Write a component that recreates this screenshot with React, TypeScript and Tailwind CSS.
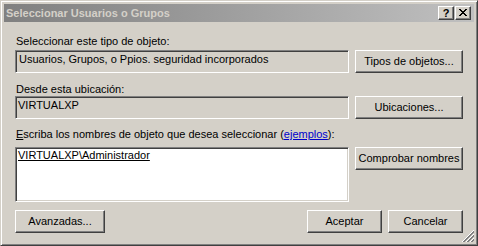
import React from "react";

const raised =
  "bg-[#d4d0c8] border border-t-white border-l-white border-r-[#404040] border-b-[#404040] shadow-[inset_-1px_-1px_#808080]";
const sunken =
  "border border-t-[#808080] border-l-[#808080] border-r-white border-b-white shadow-[inset_1px_1px_#404040,inset_-1px_-1px_#d4d0c8]";

function Btn({ w, children }: { w: string; children: React.ReactNode }) {
  return (
    <div className={`${raised} ${w} h-[23px] flex items-center justify-center shrink-0`}>
      {children}
    </div>
  );
}

export default function App() {
  return (
    <div className="relative w-[478px] h-[246px] bg-[#d4d0c8] border border-t-[#d4d0c8] border-l-[#d4d0c8] border-r-[#404040] border-b-[#404040] shadow-[inset_1px_1px_#ffffff,inset_-1px_-1px_#808080] p-[3px] flex flex-col text-[11px] leading-[13px] text-black font-['Liberation_Sans',Arial,sans-serif] overflow-hidden">
      {/* Title bar */}
      <div className="h-[18px] flex items-center bg-linear-to-r from-[#808080] to-[#c0c0c0] shrink-0">
        <div className="pl-[2px] font-bold text-[#d4d0c8] leading-[18px]">
          Seleccionar Usuarios o Grupos
        </div>
        <div className="ml-auto flex gap-[1px] pr-[3px]">
          <div className={`${raised} w-[16px] h-[14px] flex items-center justify-center`}>
            <span className="font-bold text-[11px] leading-[12px] text-black">?</span>
          </div>
          <div className={`${raised} w-[16px] h-[14px] relative`}>
            <svg
              className="absolute left-[3px] top-[2px]"
              width="8"
              height="7"
              viewBox="0 0 8 7"
              shapeRendering="crispEdges"
            >
              <g fill="#000">
                <rect x="0" y="0" width="2" height="1" />
                <rect x="6" y="0" width="2" height="1" />
                <rect x="1" y="1" width="2" height="1" />
                <rect x="5" y="1" width="2" height="1" />
                <rect x="2" y="2" width="4" height="1" />
                <rect x="3" y="3" width="2" height="1" />
                <rect x="2" y="4" width="4" height="1" />
                <rect x="1" y="5" width="2" height="1" />
                <rect x="5" y="5" width="2" height="1" />
                <rect x="0" y="6" width="2" height="1" />
                <rect x="6" y="6" width="2" height="1" />
              </g>
            </svg>
          </div>
        </div>
      </div>

      {/* Content */}
      <div className="flex flex-col px-[11px]">
        <div className="h-[28px] pt-[13px] pl-[1px] shrink-0">Seleccionar este tipo de objeto:</div>
        <div className="flex gap-[6px] h-[23px]">
          <div className={`${sunken} flex-1 h-[23px] pt-[2px] pl-[3px] bg-[#d4d0c8]`}>
            Usuarios, Grupos, o Ppios. seguridad incorporados
          </div>
          <Btn w="w-[108px]">Tipos de objetos...</Btn>
        </div>

        <div className="h-[23px] pt-[10px] pl-[1px] shrink-0">Desde esta ubicación:</div>
        <div className="flex gap-[6px] h-[23px]">
          <div className={`${sunken} flex-1 h-[23px] pt-[2px] pl-[2px] bg-[#d4d0c8]`}>VIRTUALXP</div>
          <Btn w="w-[108px]">Ubicaciones...</Btn>
        </div>

        <div className="h-[28px] pt-[9px] pl-[1px] shrink-0">
          <span className="underline">E</span>scriba los nombres de objeto que desea seleccionar (
          <span className="underline text-[#0000cc]">ejemplos</span>):
        </div>
        <div className="flex gap-[6px] h-[55px] items-start">
          <div className={`${sunken} flex-1 h-[55px] pt-[1px] pl-[2px] bg-white`}>
            <span className="underline">{"VIRTUALXP\\Administrador"}</span>
          </div>
          <Btn w="w-[108px]">Comprobar nombres</Btn>
        </div>

        <div className="flex mt-[8px] h-[23px]">
          <Btn w="w-[90px]">Avanzadas...</Btn>
          <div className="ml-auto flex gap-[6px]">
            <Btn w="w-[75px]">Aceptar</Btn>
            <Btn w="w-[75px]">Cancelar</Btn>
          </div>
        </div>
      </div>

      {/* Resize grip */}
      <svg
        className="absolute right-[3px] bottom-[3px]"
        width="12"
        height="12"
        viewBox="0 0 12 12"
      >
        <g strokeWidth="1" shapeRendering="crispEdges">
          <line x1="12" y1="0" x2="0" y2="12" stroke="#ffffff" />
          <line x1="12" y1="1" x2="1" y2="12" stroke="#808080" />
          <line x1="12" y1="2" x2="2" y2="12" stroke="#808080" />
          <line x1="12" y1="4" x2="4" y2="12" stroke="#ffffff" />
          <line x1="12" y1="5" x2="5" y2="12" stroke="#808080" />
          <line x1="12" y1="6" x2="6" y2="12" stroke="#808080" />
          <line x1="12" y1="8" x2="8" y2="12" stroke="#ffffff" />
          <line x1="12" y1="9" x2="9" y2="12" stroke="#808080" />
          <line x1="12" y1="10" x2="10" y2="12" stroke="#808080" />
        </g>
      </svg>
    </div>
  );
}
